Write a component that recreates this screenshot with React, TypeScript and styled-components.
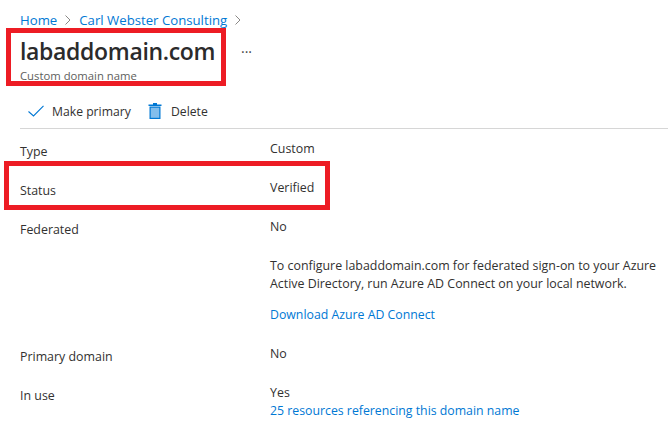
import * as React from "react";
import styled, { createGlobalStyle } from "styled-components";

const Global = createGlobalStyle`
  html, body {
    margin: 0;
    padding: 0;
    background: #fff;
    font-family: "Open Sans", "Noto Sans", sans-serif;
    overflow: hidden;
  }
`;

const Page = styled.div`
  position: relative;
  width: 668px;
  height: 426px;
  padding: 11px 0 0 20px;
  box-sizing: border-box;
  overflow: hidden;
`;

const Crumbs = styled.nav`
  display: flex;
  align-items: center;
  height: 18px;
  gap: 7px;
`;

const Crumb = styled.a`
  color: #0078d4;
  font-size: 13.2px;
  line-height: 18px;
`;

const Link = styled.a`
  color: #0078d4;
  font-size: 12.3px;
  line-height: 18px;
`;

const Title = styled.div`
  display: flex;
  align-items: center;
  height: 32px;
  margin-top: 5px;
`;

const Heading = styled.h1`
  margin: 1px 0 0;
  width: 221px;
  font-size: 23px;
  font-weight: 600;
  letter-spacing: -0.33px;
  color: #2b2b2b;
`;

const More = styled.span`
  font-size: 14px;
  color: #444;
  line-height: 14px;
  margin-top: 4px;
`;

const Subtitle = styled.div`
  font-size: 11.3px;
  line-height: 14px;
  margin-top: 3px;
  color: #605e5c;
`;

const Toolbar = styled.div`
  display: flex;
  align-items: center;
  height: 24px;
  margin-top: 16px;
  padding-left: 8px;
  padding-bottom: 5px;
  border-bottom: 1px solid #d6d6d6;
  font-size: 12.2px;
  color: #323130;
`;

const Action = styled.span<{ $gap: number; $width: number }>`
  display: flex;
  align-items: center;
  gap: ${(p) => p.$gap}px;
  width: ${(p) => p.$width}px;
`;

const Rows = styled.div`
  padding-top: 11px;
`;

const Row = styled.div<{ $height: number }>`
  display: grid;
  grid-template-columns: 250px 1fr;
  height: ${(p) => p.$height}px;
  font-size: 12.4px;
  line-height: 18px;
  color: #323130;
`;

const Label = styled.div`
  padding-top: 3px;
`;

const Paragraph = styled.p`
  margin: 21px 0 13px;
  line-height: 18px;
`;

const Mark = styled.div<{ $x: number; $y: number; $w: number; $h: number }>`
  position: absolute;
  left: ${(p) => p.$x}px;
  top: ${(p) => p.$y}px;
  width: ${(p) => p.$w}px;
  height: ${(p) => p.$h}px;
  box-sizing: border-box;
  border: 5px solid #ed1c24;
`;

export default function App() {
  return (
    <Page>
      <Global />
      <Crumbs>
        <Crumb>Home</Crumb>
        <svg width="8" height="10" viewBox="0 0 8 10" fill="none" stroke="#8a8886">
          <path d="M1.5 0.5 L6 5 L1.5 9.5" />
        </svg>
        <Crumb>Carl Webster Consulting</Crumb>
        <svg width="8" height="10" viewBox="0 0 8 10" fill="none" stroke="#8a8886">
          <path d="M1.5 0.5 L6 5 L1.5 9.5" />
        </svg>
      </Crumbs>
      <Title>
        <Heading>labaddomain.com</Heading>
        <More>···</More>
      </Title>
      <Subtitle>Custom domain name</Subtitle>
      <Toolbar>
        <Action $gap={8} $width={120}>
          <svg width="16" height="12" viewBox="0 0 16 12" fill="none" stroke="#0078d4" strokeWidth="1.1">
            <path d="M0.5 6.5 L5.5 11 L15.5 0.8" />
          </svg>
          Make primary
        </Action>
        <Action $gap={9} $width={80}>
          <svg width="14" height="16" viewBox="0 0 14 16">
            <path d="M5 0h4v1.5h4.5V3H0.5V1.5H5z" fill="#0078d4" />
            <path d="M1.5 3.5h11V16h-11z" fill="#0078d4" />
            <path d="M2.7 4.7h8.6v10.1H2.7z" fill="#83beec" />
          </svg>
          Delete
        </Action>
      </Toolbar>
      <Rows>
        <Row $height={39}>
          <Label>Type</Label>
          <div>Custom</div>
        </Row>
        <Row $height={39}>
          <Label>Status</Label>
          <div>Verified</div>
        </Row>
        <Row $height={127}>
          <Label>Federated</Label>
          <div>
            No
            <Paragraph>
              To configure labaddomain.com for federated sign-on to your Azure
              <br />
              Active Directory, run Azure AD Connect on your local network.
            </Paragraph>
            <Link>Download Azure AD Connect</Link>
          </div>
        </Row>
        <Row $height={39}>
          <Label>Primary domain</Label>
          <div>No</div>
        </Row>
        <Row $height={40}>
          <Label>In use</Label>
          <div>
            Yes
            <br />
            <Link>25 resources referencing this domain name</Link>
          </div>
        </Row>
      </Rows>
      <Mark $x={6} $y={28} $w={220} $h={58} />
      <Mark $x={4} $y={161} $w={326} $h={49} />
    </Page>
  );
}
